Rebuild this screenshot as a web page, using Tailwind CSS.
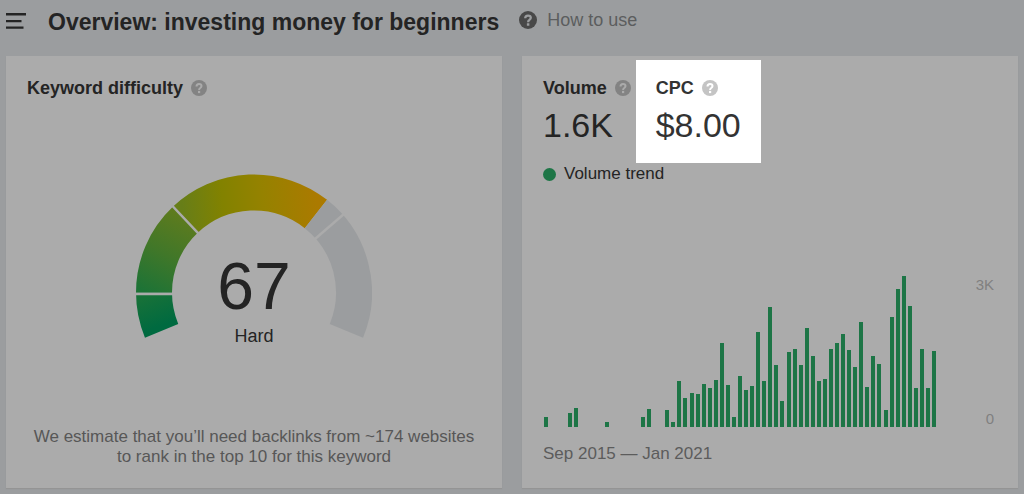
<!DOCTYPE html>
<html lang="en">
<head>
<meta charset="utf-8">
<meta name="viewport" content="width=device-width, initial-scale=1">
<title>Overview: investing money for beginners</title>
<script src="https://cdn.jsdelivr.net/npm/@tailwindcss/browser@4"></script>
</head>
<body class="flex min-h-screen flex-col bg-[#9b9d9f] px-1.5 pb-1.5 font-['Liberation_Sans',Arial,sans-serif] text-[#242424]">
  <svg class="hidden" aria-hidden="true">
    <symbol id="help" viewBox="0 0 16 16">
      <circle cx="8" cy="8" r="8" fill="currentColor"/>
      <path d="M5.500 6.500C5.500 4.700 6.500 4 8 4s2.500.8 2.500 2.100c0 1-.6 1.400-1.300 1.900C8.400 8.500 8.100 8.900 8.100 9.900" fill="none" stroke="var(--mark)" stroke-width="2"/>
      <rect x="7" y="10.900" width="2.200" height="2.200" fill="var(--mark)"/>
    </symbol>
  </svg>

  <header class="flex h-14 items-start pt-2">
    <button type="button" aria-label="Menu" class="mt-1 h-5 w-5">
      <svg viewBox="0 0 20 20" class="h-5 w-5" fill="currentColor"><path d="M0 1h20v2.500H0zM0 8h15.500v2.200H0zM0 14.500h17.500v2.200H0z"/></svg>
    </button>
    <h1 class="ml-[22px] text-[23px] leading-7 font-bold whitespace-nowrap">Overview: investing money for beginners</h1>
    <a href="#" class="ml-5 flex items-center gap-[10px] text-[18px] leading-6 whitespace-nowrap text-[#5c5d5e]">
      <svg class="h-[18px] w-[18px] text-[#484848] [--mark:#9b9d9f]"><use href="#help"/></svg>How to use
    </a>
  </header>

  <main class="grid flex-1 grid-cols-2 gap-5">
    <section class="flex flex-col bg-[#ababab] px-[21px] pt-5 pb-[21px] shadow-[0_1px_1px_#949494]">
      <h2 class="flex items-center gap-2 text-[18px] leading-6 font-bold">Keyword difficulty
        <button type="button" aria-label="About keyword difficulty" class="h-4 w-4"><svg class="h-4 w-4 text-[#838383] [--mark:#ababab]"><use href="#help"/></svg></button>
      </h2>
      <div class="relative mx-auto mt-[74px] h-[164px] w-[236px]">
        <svg viewBox="136 174 236 164" class="h-full w-full" aria-hidden="true">
          <defs>
            <linearGradient id="g1" gradientUnits="userSpaceOnUse" x1="165" y1="324" x2="154" y2="295"><stop stop-color="#006a40"/><stop offset="1" stop-color="#167139"/></linearGradient>
            <linearGradient id="g2" gradientUnits="userSpaceOnUse" x1="148" y1="293" x2="186" y2="218"><stop stop-color="#1d7336"/><stop offset=".5" stop-color="#407729"/><stop offset="1" stop-color="#5d7b1e"/></linearGradient>
            <linearGradient id="g3" gradientUnits="userSpaceOnUse" x1="184" y1="224" x2="318" y2="210"><stop stop-color="#677e18"/><stop offset=".3" stop-color="#828200"/><stop offset=".6" stop-color="#958200"/><stop offset="1" stop-color="#ab7a00"/></linearGradient>
          </defs>
          <g fill="none" stroke-width="36">
            <path d="M161.600 330.800A100 100 0 0 1 154 292.500" stroke="url(#g1)"/>
            <path d="M154 292.500A100 100 0 0 1 185.400 219.700" stroke="url(#g2)"/>
            <path d="M185.400 219.700A100 100 0 0 1 315.900 214" stroke="url(#g3)"/>
            <path d="M315.900 214A100 100 0 0 1 346.400 330.800" stroke="#9b9d9f"/>
          </g>
          <path d="M134 294h40M172 205.500l27 28.600M344.500 213.500L315 239" stroke="#ababab" stroke-width="2.500"/>
        </svg>
        <div class="absolute inset-x-0 -bottom-2 text-center">
          <p class="text-[66px] leading-[72px]">67</p>
          <p class="mt-1 text-[18px] leading-5">Hard</p>
        </div>
      </div>
      <p class="mt-auto text-center text-[17px] leading-5 text-[#575757]">We estimate that you’ll need backlinks from ~174 websites<br>to rank in the top 10 for this keyword</p>
    </section>

    <section class="flex flex-col bg-[#ababab] px-[21px] pt-5 pb-6 shadow-[0_1px_1px_#949494]">
      <div class="flex gap-[25px]">
        <div>
          <h2 class="flex items-center gap-2 text-[18px] leading-6 font-bold">Volume
            <button type="button" aria-label="About volume" class="h-4 w-4"><svg class="h-4 w-4 text-[#838383] [--mark:#ababab]"><use href="#help"/></svg></button>
          </h2>
          <p class="mt-1 text-[34px] leading-[42px]">1.6K</p>
        </div>
        <div class="relative isolate text-[#333]">
          <div class="absolute -top-4 -right-5 -bottom-[17px] -left-5 -z-10 bg-white"></div>
          <h2 class="flex items-center gap-2 text-[18px] leading-6 font-bold">CPC
            <button type="button" aria-label="About CPC" class="h-4 w-4"><svg class="h-4 w-4 text-[#c4c4c4] [--mark:#fff]"><use href="#help"/></svg></button>
          </h2>
          <p class="mt-1 text-[34px] leading-[42px]">$8.00</p>
        </div>
      </div>
      <p class="mt-4 flex items-center gap-2 text-[17px] leading-6"><span class="h-[13px] w-[13px] rounded-full bg-[#1d7546]"></span>Volume trend</p>
      <div class="mt-auto flex justify-between pl-px">
        <div id="bars" class="flex h-[152px] w-[392px] items-end justify-between" role="img" aria-label="Monthly search volume, Sep 2015 to Jan 2021"></div>
        <div class="flex flex-col justify-between pt-0.5 pr-[3px] text-right text-[15px] leading-4 text-[#808080]">
          <span>3K</span><span>0</span>
        </div>
      </div>
      <p class="mt-[17px] text-[17px] leading-5 text-[#5c5c5c]">Sep 2015 — Jan 2021</p>
    </section>
  </main>
  <script>
    const volumes = [10,0,0,0,14,19,0,0,0,0,5,0,0,0,0,0,10,18,0,0,17,5,46,29,34,33,43,39,47,84,42,10,51,37,41,95,46,120,62,26,75,78,62,99,71,46,48,78,84,93,77,60,105,40,71,63,17,110,138,151,121,39,78,39,76];
    const bars = document.getElementById('bars');
    for (const v of volumes) {
      const bar = document.createElement('span');
      bar.className = 'w-1 bg-[#1d7546]';
      bar.style.height = v + 'px';
      bars.append(bar);
    }
  </script>
</body>
</html>
